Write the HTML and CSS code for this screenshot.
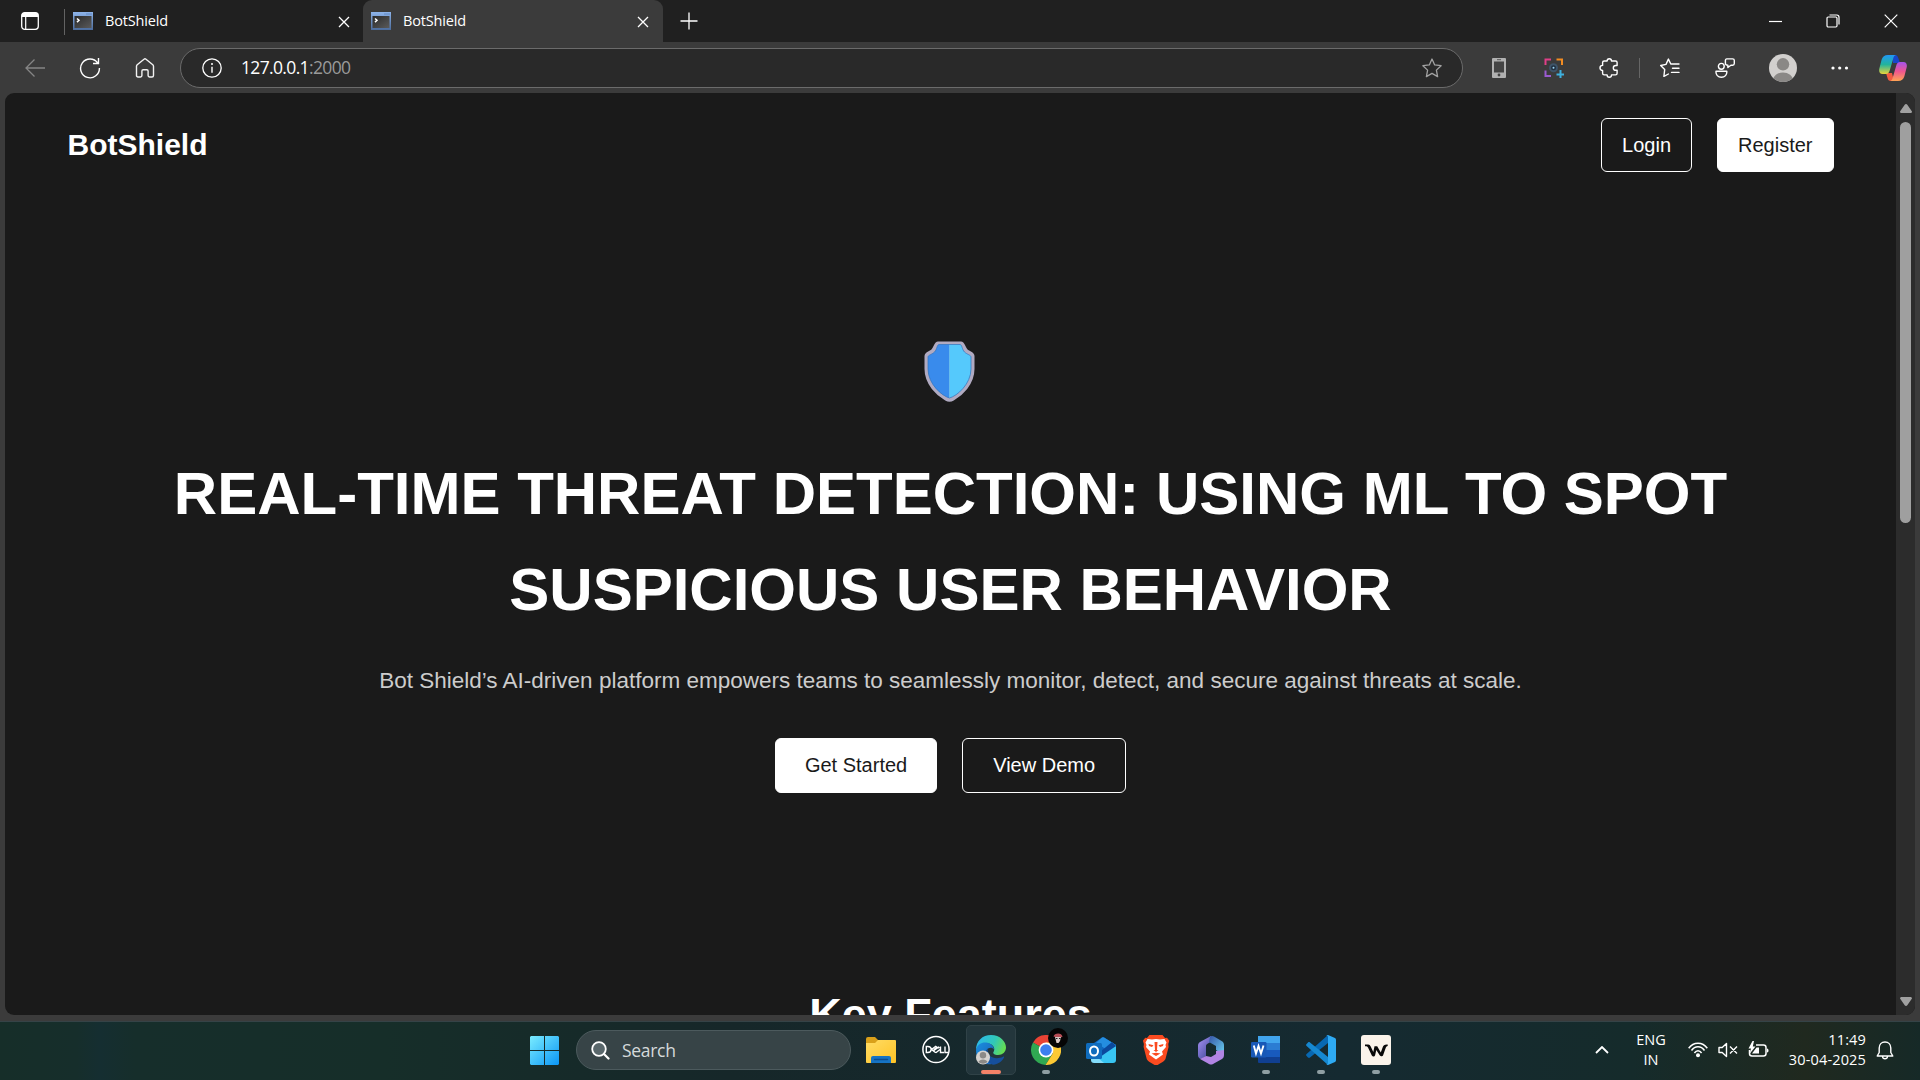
FILE: index.html
```html
<!DOCTYPE html>
<html lang="en">
<head>
<meta charset="utf-8">
<title>BotShield</title>
<link rel="stylesheet" href="styles.css">
</head>
<body>
<svg class="defs" aria-hidden="true">
  <defs>
    <linearGradient id="fav" x1="0" y1="0" x2="1" y2="1"><stop offset="0" stop-color="#2a2a2a"/><stop offset="1" stop-color="#5a5a5a"/></linearGradient>
    <linearGradient id="favEdge" x1="0" y1="0" x2="0" y2="1"><stop offset="0" stop-color="#8db4ea"/><stop offset="1" stop-color="#4c6c9c"/></linearGradient>
    <symbol id="console" viewBox="0 0 20 18">
      <rect width="20" height="18" fill="url(#favEdge)"/><rect x="1.5" y="4" width="17" height="12" fill="url(#fav)"/>
      <path d="M13.5 2h1M15.5 2h1M17.5 2h1" stroke="#3f66a3"/><path d="M4 6.5l2 1.8-2 1.8" fill="none" stroke="#fff" stroke-width="1.5"/>
    </symbol>
    <symbol id="cross" viewBox="0 0 12 12"><path d="M1 1l10 10M11 1L1 11" fill="none" stroke="#fff" stroke-width="1.3"/></symbol>
  </defs>
</svg>

<header class="titlebar">
  <div class="workspace"><svg width="18" height="18" viewBox="0 0 18 18"><rect x=".7" y=".7" width="16.6" height="16.6" rx="3" fill="none" stroke="#fff" stroke-width="1.3"/><path d="M.7 5V3.5A2.8 2.8 0 0 1 3.5.7h11a2.8 2.8 0 0 1 2.8 2.8V5z" fill="#fff"/><path d="M4.7 5v12" stroke="#fff" stroke-width="1.2"/></svg></div>
  <div class="tab"><svg class="favicon"><use href="#console"/></svg><span>BotShield</span><svg class="close"><use href="#cross"/></svg></div>
  <div class="tab active"><svg class="favicon"><use href="#console"/></svg><span>BotShield</span><svg class="close"><use href="#cross"/></svg></div>
  <div class="newtab"><svg width="18" height="18"><path d="M9 .5v17M.5 9h17" stroke="#fff" stroke-width="1.3"/></svg></div>
  <div class="window-controls">
    <div><svg width="13" height="13"><path d="M0 6.5h13" stroke="#fff" stroke-width="1.2"/></svg></div>
    <div><svg width="14" height="14" fill="none" stroke="#fff" stroke-width="1.2"><rect x="1" y="3" width="10" height="10" rx="1.2"/><path d="M3.5 1h7.3A2.2 2.2 0 0 1 13 3.200v7.300"/></svg></div>
    <div><svg width="14" height="14"><path d="M.7.7l12.600 12.600M13.300.7L.7 13.300" stroke="#fff" stroke-width="1.2"/></svg></div>
  </div>
</header>

<div class="toolbar">
  <div class="slot"><svg width="20" height="18" fill="none" stroke="#858585" stroke-width="1.3"><path d="M20 9H1M9.500.5L1 9l8.500 8.500"/></svg></div>
  <div class="slot"><svg width="22" height="22" viewBox="0 0 22 22" fill="none" stroke="#fff" stroke-width="1.4"><path d="M18.700 6A9.400 9.400 0 1 0 20.400 11M19.500 1v5.500H14"/></svg></div>
  <div class="slot"><svg width="20" height="20" viewBox="0 0 20 20" fill="none" stroke="#f2f2f2" stroke-width="1.4" stroke-linejoin="round"><path d="M1.500 8.300c0-.6.3-1.100.7-1.500L9 1.200c.6-.5 1.400-.5 2 0l6.800 5.600c.4.4.7.9.7 1.500v9.200c0 .9-.6 1.500-1.500 1.500h-2.500c-.8 0-1.400-.6-1.400-1.400V13a1.300 1.300 0 0 0-1.300-1.300H8.200A1.300 1.300 0 0 0 6.900 13v4.600c0 .8-.6 1.400-1.400 1.400H3c-.9 0-1.500-.6-1.500-1.500z"/></svg></div>
  <div class="address">
    <svg width="20" height="20" viewBox="0 0 20 20"><circle cx="10" cy="10" r="9.200" fill="none" stroke="#fff" stroke-width="1.300"/><path d="M10 8.700v6" stroke="#fff" stroke-width="1.400"/><circle cx="10" cy="5.900" r="1" fill="#fff"/></svg>
    <p class="url">127.0.0.1<span>:2000</span></p>
    <svg width="20" height="20" viewBox="0 0 20 20"><path d="M10 1l2.700 5.900 6.400.8-4.700 4.400 1.200 6.500L10 15.400l-5.600 3.200 1.200-6.500L.9 7.700l6.400-.8z" fill="none" stroke="#a2a2a2" stroke-width="1.300" stroke-linejoin="round"/></svg>
  </div>
  <div class="slot"><svg width="14" height="20" viewBox="0 0 14 20"><rect width="14" height="20" rx="1" fill="#b1b1b1"/><rect x="2" y="3.500" width="10" height="11" fill="#444"/><path d="M5 1.700h4" stroke="#555"/><circle cx="7" cy="17" r="1.400" fill="#444"/></svg></div>
  <div class="slot"><svg width="20" height="20" viewBox="0 0 20 20" fill="none" stroke-width="2"><path d="M1.500 7V1.500H7" stroke="#e03f88"/><path d="M12.500 1.500H18V7" stroke="#f28c22"/><path d="M1.500 12.500V18H7" stroke="#9a5ad0"/><path d="M16.500 12v8M12.500 16.500h7.500" stroke="#3fb0dd"/><circle cx="9.500" cy="9.700" r="3.500" stroke="#3e5469" fill="#203040"/><circle cx="9.500" cy="9.700" r="1" fill="#9dd4f5"/></svg></div>
  <div class="slot"><svg width="20" height="20" viewBox="0 0 20 20" fill="none" stroke="#fff" stroke-width="1.400" stroke-linejoin="round"><path d="M5.200 3h2.900c0-1.400.9-2.300 2.200-2.300s2.200.9 2.200 2.300h4c1 0 1.600.6 1.600 1.600v2.900h-1.300c-1.600 0-2.500 1-2.500 2.400s.9 2.400 2.500 2.400h1.300v3c0 1-.6 1.600-1.600 1.600h-4c0 1.400-.9 2.300-2.200 2.300s-2.200-.9-2.200-2.300H5.200c-1 0-1.600-.6-1.600-1.600v-2.900C2 12.400 1 11.400 1 9.900s1-2.500 2.600-2.500V4.600c0-1 .6-1.600 1.600-1.600z"/></svg></div>
  <div class="divider"></div>
  <div class="slot"><svg width="20" height="20" viewBox="0 0 20 20" fill="none" stroke="#fff" stroke-width="1.400" stroke-linejoin="round" stroke-linecap="round"><path d="M10.800 6L8.400 1.100 6 6.400.7 7.500l4 4-.8 6.900 4.500-2.400M10.800 6H19M12.500 10.200H19M11.500 14.400H19"/></svg></div>
  <div class="slot"><svg width="20" height="20" viewBox="0 0 20 20" fill="none" stroke="#fff" stroke-width="1.400" stroke-linejoin="round"><circle cx="6.300" cy="8.300" r="2.900"/><path d="M1 13.300h10.800c.4 3.500-2 6-5.400 6S.6 16.800 1 13.300zM11.800.9h5.800c1 0 1.700.7 1.700 1.700v3c0 1-.7 1.700-1.700 1.700h-1.700l-3 2.200V7.300c-1.600 0-2.500-.7-2.500-1.700v-3c0-1 .5-1.700 1.400-1.700z"/></svg></div>
  <div class="slot profile"><svg width="28" height="28" viewBox="0 0 28 28"><clipPath id="pc"><circle cx="14" cy="14" r="14"/></clipPath><g clip-path="url(#pc)"><rect width="28" height="28" fill="#d2d0ce"/><circle cx="14" cy="10.300" r="6.200" fill="#8a8886"/><ellipse cx="14" cy="26" rx="10" ry="7.500" fill="#8a8886"/></g></svg></div>
  <div class="slot more"><svg width="18" height="4" fill="#fff"><circle cx="2" cy="2" r="1.600"/><circle cx="8.700" cy="2" r="1.600"/><circle cx="15.500" cy="2" r="1.600"/></svg></div>
  <div class="slot copilot"><svg width="28" height="26" viewBox="0 0 28 26">
    <defs><linearGradient id="cpA" x1="0" y1="0" x2="0" y2="1"><stop offset="0" stop-color="#2197f5"/><stop offset=".5" stop-color="#22b49c"/><stop offset="1" stop-color="#e8d53b"/></linearGradient><linearGradient id="cpB" x1="0" y1="0" x2="0" y2="1"><stop offset="0" stop-color="#a453ec"/><stop offset=".5" stop-color="#f0568f"/><stop offset="1" stop-color="#ffa454"/></linearGradient></defs>
    <path d="M13 0h3c2 0 2.700 1.200 3.200 2.700L21 8h-7z" fill="#1746c9"/><path d="M7 18h6l2 8h-3c-2.200 0-3-1.200-3.500-3z" fill="#f25b42"/>
    <path d="M9 0h8c-1.500.3-2.200 1.600-2.700 3.300l-3.500 12c-.7 2.400-1.700 3.700-4 3.700H3.500C.8 19-.3 16.600.3 13.700l2.300-9C3.500 1.600 5.500 0 9 0z" fill="url(#cpA)"/>
    <path d="M19 26h-8c1.500-.3 2.200-1.600 2.700-3.300l3.500-12c.7-2.400 1.700-3.700 4-3.700h3.300c2.700 0 3.800 2.400 3.200 5.300l-2.300 9C24.500 24.400 22.500 26 19 26z" fill="url(#cpB)"/></svg></div>
</div>

<div class="viewport">
  <main class="page">
    <nav class="nav">
      <div class="brand">BotShield</div>
      <div class="nav-actions"><a class="btn outline">Login</a><a class="btn solid">Register</a></div>
    </nav>
    <section class="hero">
      <svg class="shield" width="51" height="61" viewBox="0 0 51 61">
        <path d="M14 2h23c2.500 0 3 5 5.500 7.500C45 12 49 12 49 15v13c0 15-12 25.500-20 30.300-2.500 1.500-4.500 1.500-7 0C14 53.500 2 43 2 28V15c0-3 4-3 6.500-5.500C11 7 11.500 2 14 2z" fill="#b0aac1" stroke="#b0aac1" stroke-width="3"/>
        <path d="M15 3.500h10.300V57C18 55 4 43 4 28V16c0-2 4-2.500 6.500-5S13 3.500 15 3.500z" fill="#398bec"/>
        <path d="M36 3.500H25.300V57C33 55 47 43 47 28V16c0-2-4-2.500-6.500-5S38 3.500 36 3.500z" fill="#55c9fc"/>
        <path d="M15 3.500h21c2 0 2 5 4.500 7.500S47 14 47 16v12c0 15-14 27-21.500 29C18 55 4 43 4 28V16c0-2 4-2.500 6.500-5S13 3.500 15 3.500z" fill="none" stroke="#3174bd" stroke-opacity=".7" stroke-width="1"/>
      </svg>
      <h1>REAL-TIME THREAT DETECTION: USING ML TO SPOT<br>SUSPICIOUS USER BEHAVIOR</h1>
      <p class="lead">Bot Shield’s AI-driven platform empowers teams to seamlessly monitor, detect, and secure against threats at scale.</p>
      <div class="cta"><a class="btn solid">Get Started</a><a class="btn outline">View Demo</a></div>
    </section>
    <section class="features"><h2>Key Features</h2></section>
  </main>
  <div class="scrollbar">
    <svg width="12" height="9"><path d="M6 0q.8 0 1.300.8L12 7.500Q12 9 10.800 9H1.200Q0 9 0 7.500L4.700.8Q5.200 0 6 0z" fill="#a0a0a0"/></svg>
    <div class="thumb"></div>
    <svg width="12" height="9"><path d="M6 9q.8 0 1.300-.8L12 1.500Q12 0 10.800 0H1.200Q0 0 0 1.500l4.700 6.700Q5.200 9 6 9z" fill="#a0a0a0"/></svg>
  </div>
</div>

<footer class="taskbar">
  <div class="start"><svg width="29" height="29" viewBox="0 0 29 29"><defs><linearGradient id="win" gradientUnits="userSpaceOnUse" x1="0" y1="0" x2="29" y2="29"><stop offset="0" stop-color="#7aecff"/><stop offset="1" stop-color="#0b96f5"/></linearGradient></defs><path d="M1 0h13v14H0V1zM15 0h13l1 1v13H15zM0 15h14v14H1l-1-1zM15 15h14v13l-1 1H15z" fill="url(#win)"/></svg></div>
  <div class="search"><svg width="19" height="19" viewBox="0 0 19 19"><circle cx="8" cy="8" r="6.800" fill="#59676b" stroke="#fff" stroke-width="1.800"/><path d="M13 13l4.500 4.500" stroke="#fff" stroke-width="2.200" stroke-linecap="round"/></svg><span>Search</span></div>
  <div class="apps">
    <div class="app"><svg viewBox="0 0 30 30"><defs><linearGradient id="fo" x1="0" y1="0" x2="1" y2="1"><stop offset="0" stop-color="#ffdc66"/><stop offset="1" stop-color="#ffc324"/></linearGradient></defs><path d="M0 4a2 2 0 0 1 2-2h7l3 3v6H0z" fill="#d9a01a"/><path d="M0 8h9l3-3h17a1 1 0 0 1 1 1v21a1 1 0 0 1-1 1H1a1 1 0 0 1-1-1z" fill="url(#fo)"/><path d="M5 28v-5a2 2 0 0 1 2-2h16a2 2 0 0 1 2 2v5z" fill="#1673c4"/><path d="M8.500 24.500h13" stroke="#0b4c91" stroke-width="1.300" stroke-linecap="round"/></svg></div>
    <div class="app"><svg viewBox="0 0 30 30" fill="none" stroke="#fff"><circle cx="15" cy="14.500" r="13.100" stroke-width="1.500"/><path d="M5.300 11.500v6h1.500c2.300 0 3.300-1.300 3.300-3s-1-3-3.300-3zM19.500 11.500v6H23M24 11.500v6h3M14.800 17.800L10.500 14.500l4.200-3.200 1.200 1-3.300 2.500M14.800 17.800l4.200-3.300M12.600 15.800l4.800-3.700 1.100.9" stroke-width="1.400"/></svg></div>
    <div class="app current"><svg viewBox="0 0 30 30"><defs><linearGradient id="eg" x1="0" y1=".2" x2="1" y2=".5"><stop offset="0" stop-color="#2bb7ee"/><stop offset=".6" stop-color="#31c8b7"/><stop offset="1" stop-color="#66dd52"/></linearGradient><linearGradient id="eb" x1="0" y1="0" x2="1" y2="1"><stop offset="0" stop-color="#1a8fe0"/><stop offset="1" stop-color="#1a5fb4"/></linearGradient></defs><path d="M0 15C0 6 6.500 0 15 0c9 0 15 6.500 15 12.500 0 4.500-3.500 7.500-8 7.500-3.500 0-5.500-1.500-4.500-3 1.800-2.700.5-7-4-8.300C9 7.500 2.500 9.500 0 15z" fill="url(#eg)"/><path d="M0 15C1.200 9 6 7 10 7.500c4.500.5 8 3.500 8 7-1-2-4-2.500-6-1-4 3-3 11 4 15.500C6 31 0 24 0 15z" fill="url(#eb)"/><path d="M12 13.500c-5 4.500-1 15 5 16.200 5-.4 9-3.300 11-7.200.5-1-.3-1.200-1-.8-7 3.500-17 .5-15-8.200z" fill="#164f9c"/><circle cx="7" cy="22.500" r="7" fill="#d5d2cf"/><circle cx="7" cy="20.200" r="3.200" fill="#8b8987"/><path d="M2.500 27c1-3.500 8-3.500 9 0A7 7 0 0 1 2.500 27z" fill="#8b8987"/></svg><i></i></div>
    <div class="app open"><svg viewBox="0 0 30 30"><path d="M15 15L2 7.500A15 15 0 0 1 28 7.500z" fill="#e94335"/><path d="M15 15L2 7.500A15 15 0 0 0 14.500 30l7-11.300z" fill="#30a852"/><path d="M15 15V7.500h13A15 15 0 0 1 14.500 30l7.500-12z" fill="#fcc934"/><circle cx="15" cy="15" r="7.400" fill="#fff"/><circle cx="15" cy="15" r="5.800" fill="#3c7ff0"/></svg><svg class="badge" viewBox="0 0 20 20"><circle cx="10" cy="10" r="10" fill="#050505"/><path d="M5.500 8.500C6 5 14 4 14.500 9l-4.500.7z" fill="#b64d55"/><path d="M7 9h6l-1 4-1.500 2h-2z" fill="#d8c9c7"/><path d="M8 10.500h1.500M11 10.500h1.500" stroke="#222"/></svg><i></i></div>
    <div class="app"><svg viewBox="0 0 30 30"><path d="M5 10L16 2.500a2 2 0 0 1 2.200 0L30 10v5L16 22 5 18z" fill="#1164bd"/><path d="M10 8l13 8 7-4v-2L18 2.500a2 2 0 0 0-2 0z" fill="#248ee0"/><path d="M14 20L30 11v14a3 3 0 0 1-3 3H9z" fill="#38c5f2"/><path d="M5 17l13 11H8a3 3 0 0 1-3-3z" fill="#83dcfa"/><path d="M14 17l12-10 4 4-16 11z" fill="#0b499d"/><rect y="8" width="16" height="16" rx="1.500" fill="#0f6cbd"/><ellipse cx="8" cy="16" rx="4" ry="4.600" fill="none" stroke="#fff" stroke-width="2"/></svg></div>
    <div class="app"><svg viewBox="0 0 30 30"><path d="M8.500 0h13L24 3l2-.3 2.300 3-1 3.200.3 3-3 11.500c-.5 2-2 3-8 6.600h-3c-6-3.600-7.500-4.600-8-6.600l-3-11.500.3-3-1-3.200L4.200 2.700 6 3z" fill="#fb4b20"/><path d="M15 4l4 .5 4.500-.5 2 3.500-1 2.500.5 2-4 4.500 1 3-3.500 2.500L15 24.500 11.500 22 8 19.500l1-3L5 12l.5-2-1-2.500L6.500 4l4.500.5z" fill="#fff"/><path d="M7.500 9l5 1.300-1.500 1.700-3-1zM22.500 9l-5 1.300 1.500 1.700 3-1zM13.500 7h3L16 15h1.500l-2.500 2-2.500-2H14zM10.500 18.500L15 17.800l4.500.7L15 21z" fill="#fb4b20"/></svg></div>
    <div class="app"><svg viewBox="0 0 30 30"><defs><linearGradient id="mA" x1="0" y1="0" x2="1" y2="1"><stop offset="0" stop-color="#a993f4"/><stop offset="1" stop-color="#333f91"/></linearGradient><linearGradient id="mB" x1="0" y1="0" x2="1" y2="1"><stop offset="0" stop-color="#3654a6"/><stop offset="1" stop-color="#6bd3f2"/></linearGradient></defs><path d="M15 1L4 7c-1.500 1-2 2-2 4v9c0 2 1 3.500 3 4l5-3V11c0-1 .5-1.700 1.500-2.300L17 5.500z" fill="url(#mA)"/><path d="M14 1.500c2-1 3-.7 4.500.2L26 6.200c1.500 1 2 2 2 4V20l-8-5v-4L13 7z" fill="url(#mB)"/><path d="M4 24l9 5c1.500.7 2.700.7 4 0l9-5c1.300-1 2-2 2-4v-5l-8 1v3l-5 3-5-1z" fill="#b184e4"/></svg></div>
    <div class="app open"><svg viewBox="0 0 30 30"><path d="M7 1h22v7H7z" fill="#41a5ee"/><path d="M7 8h22v7H7z" fill="#2b7cd3"/><path d="M7 15h22v7H7z" fill="#185abd"/><path d="M7 22h22v6H8a1 1 0 0 1-1-1z" fill="#103f91"/><rect y="7" width="15.500" height="15.500" rx="1.200" fill="#1858b7"/><path d="M2.800 10.500l2.200 8 2.500-7.500L10 18.500l2.500-8" fill="none" stroke="#fff" stroke-width="1.900"/></svg><i></i></div>
    <div class="app open"><svg viewBox="0 0 30 30"><path d="M22 0v8L4 22.500c-.7.600-1.300.5-2 0L.6 21c-.7-.8-.7-1.500 0-2z" fill="#0868b2"/><path d="M22 30v-8L4 7.500c-.7-.6-1.300-.5-2 0L.6 9c-.7.800-.7 1.500 0 2z" fill="#1688d1"/><path d="M22 0l7 3c.7.4 1 1 1 1.700v20.600c0 .7-.3 1.300-1 1.700l-7 3c-.8 0-1.300-.3-2-1 1 .8 2 .2 2-1V2c0-1.200-1-1.800-2-1 .7-.7 1.200-1 2-1z" fill="#2eaaf3"/></svg><i></i></div>
    <div class="app open"><svg viewBox="0 0 30 30"><rect width="30" height="30" rx="3" fill="#faf3ea"/><path d="M4 9.500h3.200c1.300 0 1.900.7 2.500 2l2.600 5.500 1.200-5.800h2.700l3.600 6.300 1.700-4.800c.7-2 1.900-3.200 4.300-3.200h.9v1.400c-1.200.2-1.700 1-2.200 2.500l-2.300 6.500c-.7 1.800-2.600 1.900-3.500.3L15.300 15l-1.200 5.200c-.5 1.700-2.500 1.800-3.300.2L7 12.500c-.5-1-1.200-1.400-3-1.300z" fill="#080808"/></svg><i></i></div>
  </div>
  <div class="tray">
    <svg class="chevron" width="14" height="8"><path d="M1 7l6-6 6 6" fill="none" stroke="#fff" stroke-width="1.800"/></svg>
    <div class="lang">ENG<br>IN</div>
    <div class="status">
      <svg width="20" height="16" viewBox="0 0 20 16" fill="none" stroke="#fff" stroke-width="1.500"><path d="M.7 6.200C5.500-.5 14.500-.5 19.300 6.200M3.500 8.500c3.500-5 9.500-5 13 0M6.400 11c2-3 5.200-3 7.200 0"/><circle cx="10" cy="13.300" r="2" fill="#fff" stroke="none"/></svg>
      <svg width="20" height="16" viewBox="0 0 20 16" fill="none" stroke="#fff" stroke-width="1.400" stroke-linejoin="round"><path d="M1 5.500h3.200L8.500 1.500v13L4.200 10.500H1zM12 4.500l7 7M19 4.500l-7 7"/></svg>
      <svg width="21" height="18" viewBox="0 0 21 18"><path d="M8 4h7.500A2.500 2.500 0 0 1 18 6.500v6a2.500 2.500 0 0 1-2.500 2.500H4a2.500 2.500 0 0 1-2.500-2.500V9" fill="none" stroke="#fff" stroke-width="1.500"/><path d="M19 7.500c2 0 2 4 0 4zM4 12.500h7v-6H8.500zM4.500 0L.5 7.500H3L1.500 13l6-7.500H4.800L6 0z" fill="#fff"/></svg>
    </div>
    <div class="clock">11:49<br>30-04-2025</div>
    <svg width="18" height="19" viewBox="0 0 18 19" fill="none" stroke="#fff" stroke-width="1.400" stroke-linejoin="round"><path d="M9 1C5.500 1 3.200 3.500 3.200 7v4.500L1.200 15h15.600l-2-3.500V7C14.800 3.500 12.500 1 9 1zM6.500 15.500c.3 3 4.700 3 5 0"/></svg>
  </div>
</footer>
</body>
</html>
```
FILE: styles.css
```css
* { box-sizing: border-box; }
body {
  margin: 0;
  width: 1920px;
  height: 1080px;
  overflow: hidden;
  display: flex;
  flex-direction: column;
  background: #3b3b3b;
  color: #fff;
  font-family: "Open Sans", "Noto Sans", sans-serif;
}
svg { display: block; flex: none; }
.defs { width: 0; height: 0; position: absolute; }

/* Window title bar */
.titlebar { height: 42px; display: flex; background: #202020; }
.workspace {
  width: 65px; padding-left: 21px;
  display: flex; align-items: center;
  background: linear-gradient(#636363, #636363) right 9px / 1px 26px no-repeat;
}
.tab { width: 298px; padding: 0 13px 0 8px; display: flex; align-items: center; font-size: 14.5px; letter-spacing: -0.15px; }
.tab span { flex: 1; margin-left: 12px; line-height: 20px; }
.tab:not(.active) { padding-bottom: 1px; }
.tab.active { width: 300px; height: 43px; background: #3b3b3b; border-radius: 9px 9px 0 0; padding-right: 14px; padding-bottom: 2px; }
.favicon { width: 20px; height: 18px; }
.close { width: 12px; height: 12px; margin-top: 2px; }
.newtab { width: 52px; display: flex; align-items: center; justify-content: center; }
.window-controls { margin-left: auto; display: flex; }
.window-controls div { width: 58px; display: flex; align-items: center; justify-content: center; }

/* Browser toolbar */
.toolbar { height: 51px; padding: 1px 0 0 7.5px; display: flex; align-items: center; background: #3b3b3b; }
.slot { width: 55px; display: flex; justify-content: center; flex: none; }
.slot.profile { width: 61px; }
.slot.more, .slot.copilot { width: 53px; }
.address {
  width: 1283px; height: 40px; margin: 0 8.5px 0 7.5px; padding: 0 20px 0 21px;
  display: flex; align-items: center; flex: none;
  border: 1px solid #6b6b6b; border-radius: 20px; background: #292929;
}
.url { margin: 0 0 2px 19px; flex: 1; font-size: 17.5px; letter-spacing: -0.65px; }
.url span { color: #9a9a9a; }
.divider { width: 1px; height: 20px; margin: 0 2.5px; background: #666; }

/* Page and its scrollbar */
.viewport { width: 1910px; height: 922px; margin-left: 5px; display: flex; overflow: hidden; border-radius: 9px; background: #1a1a1a; }
.page { width: 1891px; height: 922px; overflow: hidden; font-family: "Liberation Sans", Arial, sans-serif; line-height: 1.6; }
.nav { padding: 25px 62.5px; display: flex; justify-content: space-between; align-items: center; }
.brand { font-size: 30px; font-weight: 700; }
.nav-actions, .cta { display: flex; gap: 25px; }
.btn { padding: 10px 20px; border: 1px solid #fff; border-radius: 6px; font-size: 20px; line-height: 32px; }
.solid { background: #fff; color: #1a1a1a; }
.hero { padding-top: 144px; display: flex; flex-direction: column; align-items: center; text-align: center; }
.shield { margin-right: 2px; }
h1 { margin: 44px 0 0; font-size: 60px; line-height: 96px; }
.lead { margin: 25px 0 0; font-size: 22.5px; line-height: 36px; color: #ccc; }
.cta { margin-top: 39px; }
.cta .btn { padding: 10px 30px 11px; }
.cta .solid { padding: 10px 29px 11px; }
.features { padding-top: 186px; text-align: center; }
h2 { margin: 0; font-size: 45px; line-height: 72px; }
.scrollbar { width: 19px; padding: 11px 0 9px; display: flex; flex-direction: column; align-items: center; background: #2c2c2c; }
.thumb { width: 11px; height: 401px; margin: 9px 0 auto; border-radius: 6px; background: #9f9f9f; }

/* Taskbar */
.taskbar {
  height: 59px; margin-top: 6px; padding-bottom: 2px; display: flex; align-items: center;
  border-top: 1px solid #354347;
  background: linear-gradient(90deg, #162e29 0, #162e2b 4%, #152e31 5.2%, #162e2b 7%, #162e29 20%, #162729 38%, #152a31 70%, #152b2b 85%, #20291f 94%, #162927 100%);
}
.start { width: 576px; padding-left: 530px; }
.search { width: 275px; height: 40px; padding-left: 14px; display: flex; align-items: center; gap: 12px; border: 1px solid #4c5a5d; border-radius: 20px; background: #374447; font-size: 17.5px; color: #d5dadb; }
.search span { letter-spacing: -0.3px; }
.apps { margin-left: 2.5px; display: flex; }
.app { width: 55px; height: 56px; position: relative; display: flex; align-items: center; justify-content: center; }
.app svg { width: 30px; height: 30px; }
.app.current { margin: 3px 2.5px 0; width: 50px; height: 50px; border: 1px solid #304247; border-radius: 5px; background: #23363c; }
.app i { position: absolute; bottom: 4px; width: 8px; height: 4px; border-radius: 2px; background: #8f9fa3; }
.app.current i { bottom: 0; width: 20px; background: #f28268; }
.app .badge { position: absolute; left: 29px; top: 6px; width: 20px; height: 20px; }
.tray { margin-left: auto; padding-right: 26px; display: flex; align-items: center; font-size: 14.5px; line-height: 20px; }
.chevron { margin-right: 1px; }
.lang { width: 34px; margin-left: 24px; text-align: center; }
.status { display: flex; align-items: center; gap: 10px; margin-left: 20px; }
.clock { width: 90px; margin: 0 10px 0 7px; text-align: right; letter-spacing: 0.15px; }
```
